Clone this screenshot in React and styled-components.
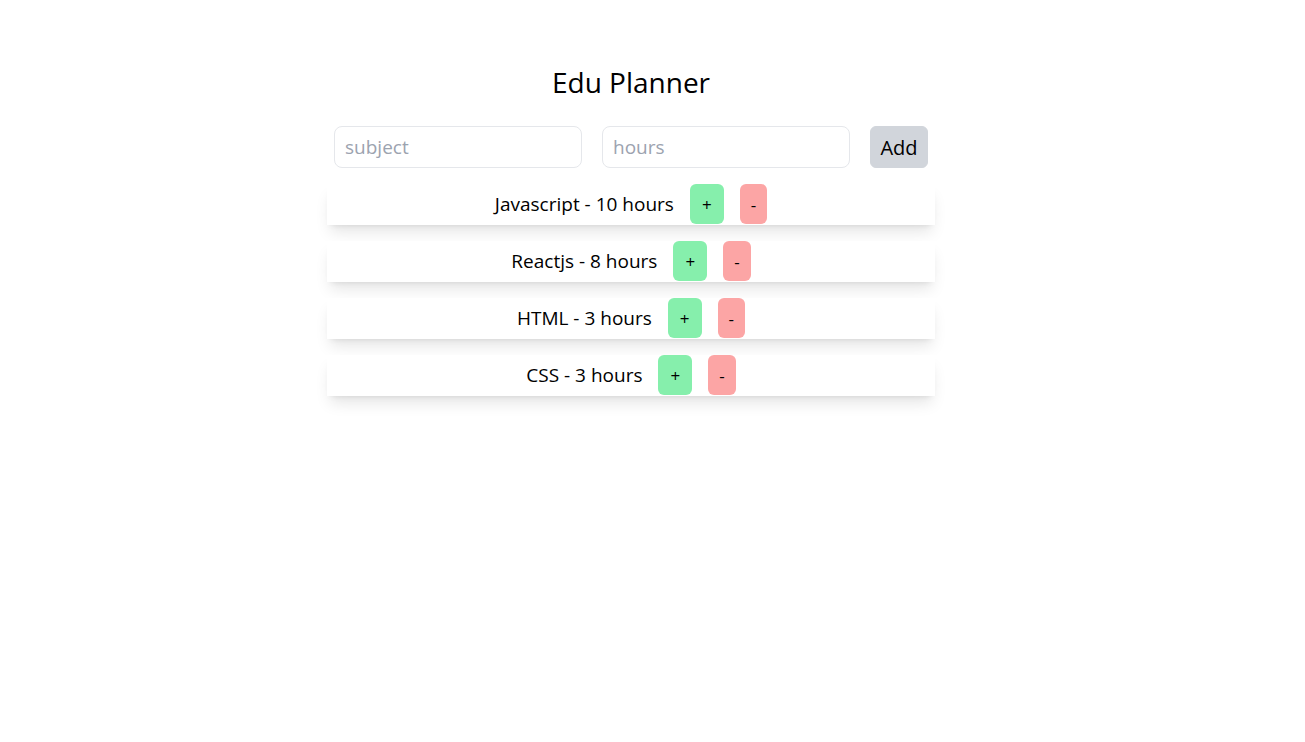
import React, { useState } from "react";
import styled, { createGlobalStyle } from "styled-components";

const GlobalStyle = createGlobalStyle`
  * {
    box-sizing: border-box;
  }
  body {
    margin: 0;
    background: #ffffff;
    font-family: "Segoe UI", "Open Sans", sans-serif;
    color: #000000;
  }
`;

const Page = styled.div`
  width: 1262px;
  padding: 64px 0 40px;
  display: flex;
  flex-direction: column;
  align-items: center;
`;

const Title = styled.h1`
  margin: 0;
  font-size: 28px;
  font-weight: 400;
  line-height: 36px;
`;

const Form = styled.form`
  display: flex;
  gap: 20px;
  margin-top: 26px;
`;

const Input = styled.input`
  width: 248px;
  height: 42px;
  padding: 0 10px;
  border: 1px solid #e5e7eb;
  border-radius: 8px;
  font-family: inherit;
  font-size: 19px;
  outline: none;
  &::placeholder {
    color: #9ca3af;
  }
`;

const AddButton = styled.button`
  height: 42px;
  width: 58px;
  padding: 0;
  border: 1px solid #d1d5db;
  border-radius: 6px;
  background: #d1d5db;
  font-family: inherit;
  font-size: 20px;
  color: #000;
  cursor: pointer;
`;

const List = styled.ul`
  list-style: none;
  margin: 16px 0 0;
  padding: 0;
  width: 608px;
  display: flex;
  flex-direction: column;
  gap: 16px;
`;

const Item = styled.li`
  height: 41px;
  display: flex;
  justify-content: center;
  align-items: stretch;
  gap: 16px;
  background: #ffffff;
  box-shadow: 0 10px 15px -3px rgba(0, 0, 0, 0.1),
    0 4px 6px -4px rgba(0, 0, 0, 0.1);
`;

const Label = styled.span`
  font-size: 19px;
  line-height: 41px;
`;

const StepButton = styled.button`
  margin-bottom: 1px;
  padding: 0 ${(p) => (p.$plus ? "12px" : "11px")};
  border: none;
  border-radius: 6px;
  background: ${(p) => (p.$plus ? "#86efac" : "#fca5a5")};
  font-family: inherit;
  font-size: 17px;
  color: #000;
  cursor: pointer;
`;

const initial = [
  { subject: "Javascript", hours: 10 },
  { subject: "Reactjs", hours: 8 },
  { subject: "HTML", hours: 3 },
  { subject: "CSS", hours: 3 },
];

export default function App() {
  const [items, setItems] = useState(initial);
  const [subject, setSubject] = useState("");
  const [hours, setHours] = useState("");

  const change = (index, delta) =>
    setItems((list) =>
      list.map((it, i) =>
        i === index ? { ...it, hours: Math.max(0, it.hours + delta) } : it
      )
    );

  const add = (e) => {
    e.preventDefault();
    if (!subject || !hours) return;
    setItems((list) => [...list, { subject, hours: Number(hours) }]);
    setSubject("");
    setHours("");
  };

  return (
    <>
      <GlobalStyle />
      <Page>
        <Title>Edu Planner</Title>
        <Form onSubmit={add}>
          <Input
            placeholder="subject"
            value={subject}
            onChange={(e) => setSubject(e.target.value)}
          />
          <Input
            placeholder="hours"
            type="number"
            value={hours}
            onChange={(e) => setHours(e.target.value)}
          />
          <AddButton type="submit">Add</AddButton>
        </Form>
        <List>
          {items.map((it, i) => (
            <Item key={i}>
              <Label>
                {it.subject} - {it.hours} hours
              </Label>
              <StepButton $plus onClick={() => change(i, 1)}>
                +
              </StepButton>
              <StepButton onClick={() => change(i, -1)}>-</StepButton>
            </Item>
          ))}
        </List>
      </Page>
    </>
  );
}
